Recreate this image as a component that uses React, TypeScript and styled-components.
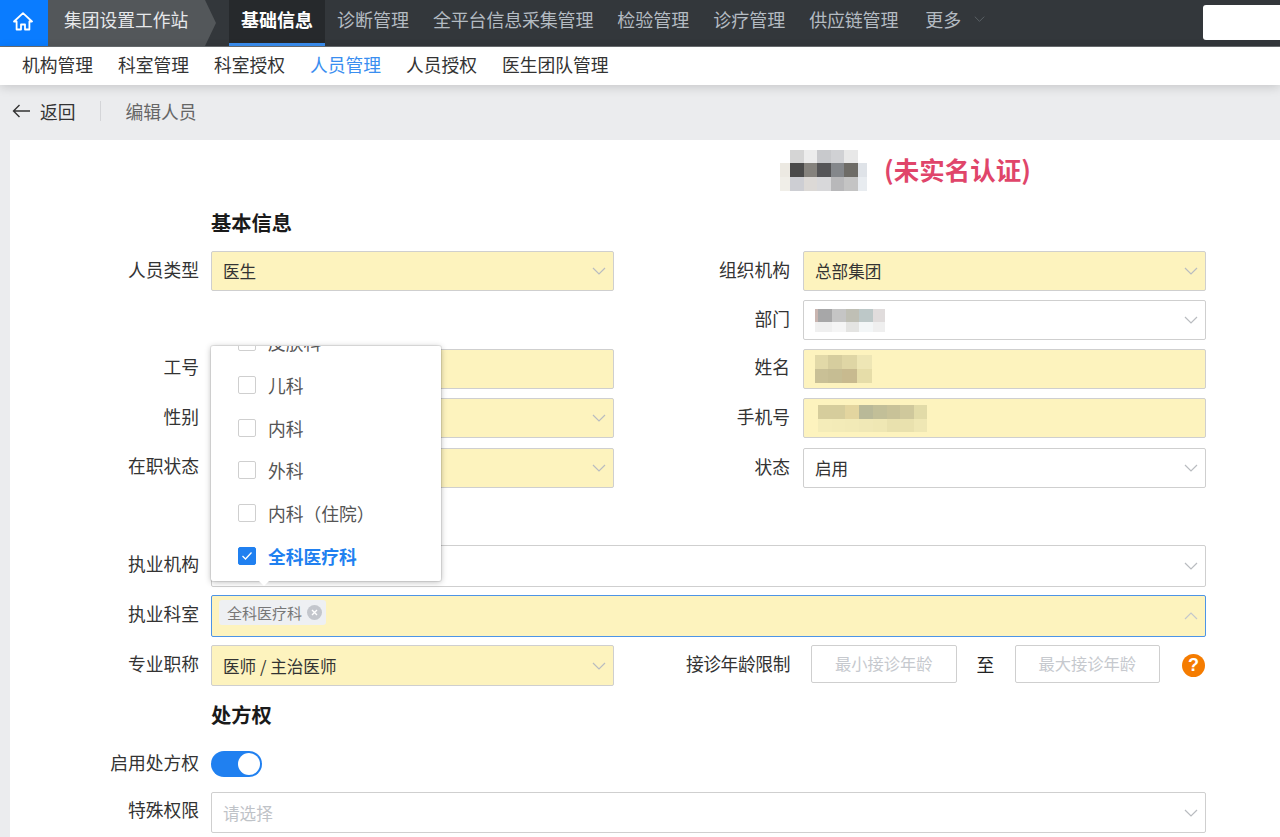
import { FC, ReactNode } from "react";
import styled, { createGlobalStyle } from "styled-components";

const GlobalStyle = createGlobalStyle`
    html, body {
        margin: 0;
        padding: 0;
        height: 837px;
        overflow: hidden;
        background: #ebecee;
        font-family: "Noto Sans CJK SC", "Liberation Sans", sans-serif;
        color: #333;
    }
    * {
        box-sizing: border-box;
    }
`;

const TopBar = styled.header`
    display: flex;
    height: 47px;
    background: #33373b;
    border-bottom: 1px solid #6b6f72;
`;

const HomeButton = styled.div`
    width: 48px;
    display: flex;
    justify-content: center;
    align-items: center;
    padding: 0 3px 3px 0;
    background: #0a7cff;
`;

const Station = styled.div`
    width: 168px;
    padding-left: 16px;
    margin-right: 13px;
    line-height: 38px;
    font-size: 17.75px;
    color: #e6e8ea;
    background: #53575a;
    clip-path: polygon(0 0, 157px 0, 168px 50%, 157px 100%, 0 100%);
`;

const Tab = styled.div<{ $active?: boolean }>`
    height: 46px;
    padding: 0 12px;
    line-height: 38px;
    font-size: 18px;
    white-space: nowrap;
    font-weight: ${(p) => (p.$active ? 700 : 400)};
    color: ${(p) => (p.$active ? "#fff" : "#b4bbc2")};
    background: ${(p) => (p.$active ? "#26292c" : "none")};
    border-bottom: 3px solid ${(p) => (p.$active ? "#3a8ef0" : "transparent")};
`;

const TightTab = styled(Tab)`
    letter-spacing: -0.2px;
`;

const MoreTab = styled(Tab)`
    display: flex;
    align-items: center;
    gap: 13px;
    padding-bottom: 6px;
    margin-left: 3px;
`;

const SearchBox = styled.div`
    width: 77px;
    height: 35px;
    margin: 5px 0 0 auto;
    background: #fff;
    border-radius: 3px 0 0 3px;
`;

const SubNav = styled.nav`
    position: relative;
    display: flex;
    gap: 25px;
    height: 38px;
    padding-left: 22px;
    line-height: 35px;
    font-size: 17.75px;
    background: #fff;
    box-shadow: 0 2px 10px rgba(0, 0, 0, 0.16);
`;

const SubItem = styled.a<{ $active?: boolean }>`
    color: ${(p) => (p.$active ? "#3a8ef0" : "#333")};
`;

const BackRow = styled.div`
    display: flex;
    align-items: center;
    height: 55px;
    padding: 0 0 4px 12px;
    font-size: 17.75px;
`;

const BackLink = styled.span`
    display: flex;
    align-items: center;
    gap: 10px;
    padding-right: 24px;
    border-right: 1px solid #d4d5d8;
    line-height: 20px;
`;

const PageTitle = styled.span`
    padding-left: 25px;
    color: #666;
`;

const Panel = styled.main`
    margin-left: 10px;
    height: 697px;
    padding-top: 10px;
    background: #fff;
`;

const NameRow = styled.div`
    display: flex;
    align-items: center;
    gap: 17px;
    height: 41px;
    padding-left: 770px;
`;

const Warning = styled.span`
    font-size: 25.5px;
    font-weight: 700;
    line-height: 40px;
    margin-top: -3px;
    color: #e0456a;
`;

const SectionTitle = styled.h2<{ $top: number }>`
    margin: ${(p) => p.$top}px 0 0 201px;
    font-size: 20.3px;
    line-height: 28px;
    font-weight: 700;
    color: #1a1a1a;
`;

const FormRow = styled.div<{ $top: number }>`
    display: grid;
    grid-template-columns: 201px 403px 189px 403px;
    align-items: center;
    margin-top: ${(p) => p.$top}px;
`;

const Label = styled.label<{ $lift?: number }>`
    padding-right: 12px;
    text-align: right;
    font-size: 17.75px;
    line-height: 40px;
    white-space: nowrap;
    transform: translateY(-${(p) => p.$lift ?? 2}px);
`;

const NarrowLabel = styled(Label)`
    padding-right: 13px;
`;

const AgeLabel = styled(NarrowLabel)`
    letter-spacing: -0.4px;
`;

const Control = styled.div<{ $filled?: boolean; $focus?: boolean; $wide?: boolean; $height?: number }>`
    position: relative;
    display: flex;
    align-items: center;
    height: ${(p) => p.$height ?? 40}px;
    padding: 0 7px 0 11px;
    grid-column: ${(p) => (p.$wide ? "2 / 5" : "auto")};
    font-size: 16.6px;
    color: #333;
    background: ${(p) => (p.$filled ? "#fdf3be" : "#fff")};
    border: 1px solid ${(p) => (p.$focus ? "#4d94e6" : "#cfcfcf")};
    border-radius: 2px;
`;

const Chevron = styled.svg<{ $up?: boolean }>`
    width: 14px;
    height: 8px;
    margin-left: auto;
    flex: none;
    fill: none;
    stroke: ${(p) => (p.$up ? "#c4c8cc" : "#b9bcc0")};
    stroke-width: 1.2;
    transform: ${(p) => (p.$up ? "rotate(180deg)" : "none")};
`;

const Arrow: FC<{ up?: boolean }> = ({ up }) => (
    <Chevron $up={up} viewBox="0 0 14 8">
        <polyline points="1,1 7,7 13,1" />
    </Chevron>
);

const MoreArrow = styled(Chevron)`
    width: 11px;
    margin-left: 0;
    stroke: #5e6468;
`;

const Placeholder = styled.span`
    color: #bfc3c8;
`;

const Popover = styled.div`
    position: absolute;
    left: -1px;
    bottom: calc(100% + 15px);
    width: 230px;
    height: 235px;
    display: flex;
    flex-direction: column;
    justify-content: flex-end;
    padding: 0 0 4px 27px;
    overflow: hidden;
    background: #fff;
    border-radius: 2px;
    box-shadow: 0 0 0 1px rgba(0, 0, 0, 0.08), 0 1px 6px rgba(0, 0, 0, 0.28);
`;

const PopoverTail = styled.div`
    position: absolute;
    left: 45px;
    bottom: calc(100% + 10px);
    width: 14px;
    height: 7px;
    background: #fff;
    clip-path: polygon(0 0, 100% 0, 50% 100%);
`;

const Option = styled.div<{ $checked?: boolean }>`
    display: flex;
    flex: none;
    align-items: center;
    gap: 12px;
    height: 42.7px;
    font-size: 17.75px;
    white-space: nowrap;
    font-weight: ${(p) => (p.$checked ? 700 : 400)};
    color: ${(p) => (p.$checked ? "#2080f0" : "#555")};
`;

const Check = styled.span<{ $checked?: boolean }>`
    width: 18px;
    height: 18px;
    display: flex;
    justify-content: center;
    align-items: center;
    border-radius: 2px;
    background: ${(p) => (p.$checked ? "#2080f0" : "#fff")};
    border: 1px solid ${(p) => (p.$checked ? "#2080f0" : "#cfcfcf")};
`;

const Tag = styled.span`
    display: flex;
    align-items: center;
    gap: 5px;
    height: 25px;
    margin: -8px 0 0 -4px;
    padding: 0 4px 0 8px;
    font-size: 15px;
    color: #777;
    background: #eef0f3;
    border-radius: 3px;
`;

const AgeBox = styled.div`
    width: 145.5px;
    height: 38px;
    display: flex;
    justify-content: center;
    align-items: center;
    padding-bottom: 2px;
    font-size: 16.3px;
    color: #c6c9ce;
    background: #fff;
    border: 1px solid #cfcfcf;
    border-radius: 2px;
`;

const AgeRange = styled.div`
    display: flex;
    align-items: center;
    align-self: start;
    grid-column: 4;
    padding-left: 8px;
`;

const AgeTo = styled.span`
    width: 58px;
    text-align: center;
    font-size: 17.75px;
    color: #222;
`;

const HelpBadge = styled.span`
    width: 23px;
    height: 23px;
    margin: 2px 0 0 22px;
    display: flex;
    justify-content: center;
    align-items: center;
    font-family: "Liberation Sans", sans-serif;
    font-size: 18px;
    font-weight: 700;
    color: #fff;
    background: #f57c00;
    border-radius: 50%;
`;

const Switch = styled.span`
    display: flex;
    justify-content: flex-end;
    align-items: center;
    width: 51px;
    height: 26px;
    padding: 2px;
    background: #2080f0;
    border-radius: 13px;
`;

const Knob = styled.span`
    width: 22px;
    height: 22px;
    background: #fff;
    border-radius: 50%;
`;

const MosaicSvg = styled.svg`
    display: block;
    flex: none;
`;

const Mosaic: FC<{ w: number; h: number; x0: number; cw: number; rowH: number[]; rows: string[][] }> = ({ w, h, x0, cw, rowH, rows }) => {
    let y = 0;
    return (
        <MosaicSvg width={w} height={h} shapeRendering="crispEdges">
            {rows.map((row, r) => {
                const top = y;
                y += rowH[r];
                return row.map((c, i) => <rect key={`${r}-${i}`} x={x0 + i * cw} y={top} width={cw} height={rowH[r]} fill={c} />);
            })}
        </MosaicSvg>
    );
};

const Field: FC<{ label: string; lift?: number; children: ReactNode }> = ({ label, lift, children }) => (
    <>
        <Label $lift={lift}>{label}</Label>
        {children}
    </>
);

const options = ["皮肤科", "儿科", "内科", "外科", "内科（住院）"];

export default function App() {
    return (
        <>
            <GlobalStyle />
            <TopBar>
                <HomeButton>
                    <svg width="20" height="19" viewBox="0 0 20 19" fill="none" stroke="#fff" strokeWidth="1.8" strokeLinejoin="round">
                        <path d="M1 9.5L10 1.2l9 8.3h-2.6v8H12v-5H8v5H3.6v-8z" />
                    </svg>
                </HomeButton>
                <Station>集团设置工作站</Station>
                <Tab $active>基础信息</Tab>
                <Tab>诊断管理</Tab>
                <TightTab>全平台信息采集管理</TightTab>
                <Tab>检验管理</Tab>
                <Tab>诊疗管理</Tab>
                <TightTab>供应链管理</TightTab>
                <MoreTab>
                    更多
                    <MoreArrow viewBox="0 0 14 8">
                        <polyline points="1,1 7,7 13,1" />
                    </MoreArrow>
                </MoreTab>
                <SearchBox />
            </TopBar>
            <SubNav>
                <SubItem>机构管理</SubItem>
                <SubItem>科室管理</SubItem>
                <SubItem>科室授权</SubItem>
                <SubItem $active>人员管理</SubItem>
                <SubItem>人员授权</SubItem>
                <SubItem>医生团队管理</SubItem>
            </SubNav>
            <BackRow>
                <BackLink>
                    <svg width="18" height="14" viewBox="0 0 18 14" fill="none" stroke="#333" strokeWidth="1.4">
                        <path d="M18 7H1.5M7.5 1L1.5 7l6 6" />
                    </svg>
                    返回
                </BackLink>
                <PageTitle>编辑人员</PageTitle>
            </BackRow>
            <Panel>
                <NameRow>
                    <Mosaic
                        w={87}
                        h={41}
                        x0={-3.6}
                        cw={13.6}
                        rowH={[13, 14, 14]}
                        rows={[
                            ["#fff", "#d5d5d5", "#ececec", "#c8c9cc", "#d0d1d4", "#e8e8e8", "#fff"],
                            ["#ece9e2", "#4a4a4a", "#85827d", "#555557", "#84878b", "#6e6c67", "#dfe3e8"],
                            ["#f0eee8", "#cdced3", "#dcd9d6", "#d8d8da", "#b8b8ba", "#c4c4c4", "#e8ecf0"],
                        ]}
                    />
                    <Warning>(未实名认证)</Warning>
                </NameRow>
                <SectionTitle $top={17}>基本信息</SectionTitle>
                <FormRow $top={15}>
                    <Field label="人员类型">
                        <Control $filled>
                            医生
                            <Arrow />
                        </Control>
                    </Field>
                    <NarrowLabel>组织机构</NarrowLabel>
                    <Control $filled>
                        总部集团
                        <Arrow />
                    </Control>
                </FormRow>
                <FormRow $top={9}>
                    <span />
                    <span />
                    <NarrowLabel>部门</NarrowLabel>
                    <Control>
                        <Mosaic
                            w={70}
                            h={23}
                            x0={-10.4}
                            cw={13.7}
                            rowH={[13, 10]}
                            rows={[
                                ["#c9b5b0", "#a7a7a8", "#c5c5c5", "#bfbfb5", "#bdc8c8", "#e0dcdc"],
                                ["#f0f0f0", "#efefef", "#f5f5f5", "#e4e4e2", "#f3f6f7", "#efefef"],
                            ]}
                        />
                        <Arrow />
                    </Control>
                </FormRow>
                <FormRow $top={9}>
                    <Field label="工号" lift={3}>
                        <Control $filled />
                    </Field>
                    <NarrowLabel $lift={3}>姓名</NarrowLabel>
                    <Control $filled>
                        <Mosaic
                            w={57}
                            h={28}
                            x0={-2}
                            cw={14.7}
                            rowH={[14, 14]}
                            rows={[
                                ["#e2d9a8", "#d6cd9e", "#dfd6a5", "#eee6b5"],
                                ["#c9c096", "#c6bd93", "#c8ba8f", "#e6dda9"],
                            ]}
                        />
                    </Control>
                </FormRow>
                <FormRow $top={9}>
                    <Field label="性别">
                        <Control $filled>
                            <Arrow />
                        </Control>
                    </Field>
                    <NarrowLabel>手机号</NarrowLabel>
                    <Control $filled>
                        <Mosaic
                            w={112}
                            h={27}
                            x0={3}
                            cw={13.7}
                            rowH={[14, 13]}
                            rows={[
                                ["#d6cd9c", "#d6cd9c", "#e3d59f", "#b9b998", "#c2bf98", "#c8c298", "#cfc89c", "#e2dba8"],
                                ["#f4ecb9", "#f3ebb8", "#f2eab7", "#f0e8b6", "#efe7b4", "#e9e1ae", "#e9e1ae", "#efe7b4"],
                            ]}
                        />
                    </Control>
                </FormRow>
                <FormRow $top={10}>
                    <Field label="在职状态" lift={3}>
                        <Control $filled>
                            <Arrow />
                        </Control>
                    </Field>
                    <NarrowLabel>状态</NarrowLabel>
                    <Control>
                        启用
                        <Arrow />
                    </Control>
                </FormRow>
                <FormRow $top={57}>
                    <Field label="执业机构" lift={3}>
                        <Control $wide $height={42}>
                            <Arrow />
                        </Control>
                    </Field>
                </FormRow>
                <FormRow $top={8}>
                    <Field label="执业科室" lift={3}>
                        <Control $wide $filled $focus $height={42}>
                            <Tag>
                                全科医疗科
                                <svg width="15" height="15" viewBox="0 0 15 15">
                                    <circle cx="7.5" cy="7.5" r="7.5" fill="#c3c6cc" />
                                    <path d="M5 5l5 5M10 5l-5 5" stroke="#fff" strokeWidth="1.4" />
                                </svg>
                            </Tag>
                            <Arrow up />
                            <Popover>
                                {options.map((name) => (
                                    <Option key={name}>
                                        <Check />
                                        {name}
                                    </Option>
                                ))}
                                <Option $checked>
                                    <Check $checked>
                                        <svg width="12" height="10" viewBox="0 0 12 10" fill="none" stroke="#fff" strokeWidth="1.3">
                                            <polyline points="1.5,5 4.5,8 10.5,1.5" />
                                        </svg>
                                    </Check>
                                    全科医疗科
                                </Option>
                            </Popover>
                            <PopoverTail />
                        </Control>
                    </Field>
                </FormRow>
                <FormRow $top={8}>
                    <Field label="专业职称" lift={3}>
                        <Control $filled $height={41}>
                            医师 / 主治医师
                            <Arrow />
                        </Control>
                    </Field>
                    <AgeLabel $lift={3}>接诊年龄限制</AgeLabel>
                    <AgeRange>
                        <AgeBox>最小接诊年龄</AgeBox>
                        <AgeTo>至</AgeTo>
                        <AgeBox>最大接诊年龄</AgeBox>
                        <HelpBadge>?</HelpBadge>
                    </AgeRange>
                </FormRow>
                <SectionTitle $top={14}>处方权</SectionTitle>
                <FormRow $top={16}>
                    <Field label="启用处方权">
                        <Switch>
                            <Knob />
                        </Switch>
                    </Field>
                </FormRow>
                <FormRow $top={8}>
                    <Field label="特殊权限" lift={4}>
                        <Control $wide $height={41}>
                            <Placeholder>请选择</Placeholder>
                            <Arrow />
                        </Control>
                    </Field>
                </FormRow>
            </Panel>
        </>
    );
}
